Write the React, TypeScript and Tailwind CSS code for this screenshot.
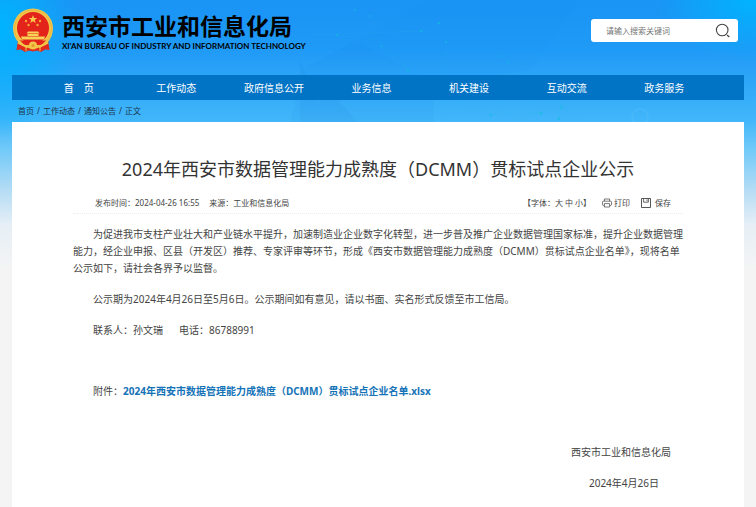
import React from 'react';

interface ILink {
	id: number;
	label: string;
}

const navItems: ILink[] = [
	{ id: 1, label: '首\u2003页' },
	{ id: 2, label: '工作动态' },
	{ id: 3, label: '政府信息公开' },
	{ id: 4, label: '业务信息' },
	{ id: 5, label: '机关建设' },
	{ id: 6, label: '互动交流' },
	{ id: 7, label: '政务服务' }
];

const crumbs: ILink[] = [
	{ id: 1, label: '首页' },
	{ id: 2, label: '工作动态' },
	{ id: 3, label: '通知公告' }
];

const fontSizes = ['大', '中', '小'];

const Emblem = () => (
	<svg viewBox="0 0 42 46" className="h-[46px] w-[42px] shrink-0" aria-hidden="true">
		<path
			d="M6 32 L4.5 42 L9 41.5 L13 44 L17 42.5 L21 43.5 L25 42.5 L29 44 L33 41.5 L37.5 42 L36 32Z"
			fill="#e02a1c"
		/>
		<circle cx="21" cy="20.5" r="20" fill="#f3c64a" />
		<circle cx="21" cy="20.5" r="18.4" fill="none" stroke="#e8ad3a" strokeWidth="0.8" />
		<circle cx="21" cy="20" r="16" fill="#e3241b" />
		<path d="M21 7l1.1 2.9 3.1.1-2.4 1.9.9 3-2.7-1.7-2.7 1.7.9-3-2.4-1.9 3.1-.1z" fill="#f9c94c" />
		<g fill="#f6a93b">
			<circle cx="14" cy="13" r="1.2" />
			<circle cx="28" cy="13" r="1.2" />
			<circle cx="16.5" cy="17" r="1.2" />
			<circle cx="25.5" cy="17" r="1.2" />
		</g>
		<path d="M16 23.5h10l1.5 2h-13zM15.5 26h11v2h-11zM9 28.5h24l-1 3H10z" fill="#f8d257" />
		<path d="M8 32c7 2 19 2 26 0l-4 5H12z" fill="#e3241b" />
		<circle cx="21" cy="37.5" r="4" fill="#f3c64a" />
		<circle cx="21" cy="37.5" r="1.6" fill="#e8982b" />
		<path d="M6 34.5l9 4.5M36 34.5l-9 4.5" stroke="#f3c64a" strokeWidth="2" />
		<path d="M14 39v4M28 39v4" stroke="#f3c64a" strokeWidth="1" />
	</svg>
);

const Backdrop = () => (
	<svg
		viewBox="0 0 756 122"
		preserveAspectRatio="none"
		className="pointer-events-none absolute inset-x-0 top-0 h-[122px] w-full"
		aria-hidden="true"
	>
		<path d="M304 68L356 41L434 84V122H290z" fill="#1674d8" opacity="0.06" />
		<path d="M428 0L356 41L434 84L530 70L578 0z" fill="#0d84f0" opacity="0.05" />
		<path d="M300 60L326 122H300zM318 100L336 98L358 122H325z" fill="#1674d8" opacity="0.08" />
		<g stroke="#22c3e8" strokeWidth="0.5" fill="none" opacity="0.25">
			<path d="M313 35L337 34L421 31L439 23M381 45L408 70M500 56L518 70M446 42V122" />
			<path d="M456 100L491 115L541 113L561 107L559 119M491 115L476 122M500 100L504 122M530 100L541 113L508 122" />
			<path d="M561 107L580 122M561 107L548 100" />
		</g>
		<g fill="#12bfe0" opacity="0.6">
			<circle cx="337" cy="35" r="1.2" />
			<circle cx="355" cy="10" r="1" />
			<circle cx="370" cy="16" r="1" />
			<circle cx="381" cy="46" r="1" />
			<circle cx="408" cy="71" r="1.2" />
			<circle cx="421" cy="31" r="1.2" />
			<circle cx="439" cy="23" r="1.2" />
			<circle cx="446" cy="42" r="1.2" />
			<circle cx="498" cy="56" r="1" />
			<circle cx="508" cy="62" r="1" />
			<circle cx="491" cy="115" r="1.2" />
			<circle cx="541" cy="113" r="1.6" />
			<circle cx="561" cy="107" r="1.4" />
			<circle cx="559" cy="119" r="1.4" />
		</g>
		<circle cx="640" cy="117" r="8" fill="none" stroke="#6cc9fb" strokeWidth="1.5" opacity="0.25" />
	</svg>
);

const SearchIcon = () => (
	<svg viewBox="0 0 16 16" className="size-4" fill="none" stroke="#444" aria-hidden="true">
		<circle cx="7.2" cy="7" r="5.8" strokeWidth="1.1" />
		<path d="M12 12l2.3 2" strokeWidth="1.2" />
	</svg>
);

const PrintIcon = () => (
	<svg viewBox="0 0 10 10" className="size-[10px]" fill="none" stroke="#555" aria-hidden="true">
		<path
			d="M2.4 3.2V1h5.2v2.2M2.4 7.4h-1a.9.9 0 0 1-.9-.9V4.1a.9.9 0 0 1 .9-.9h7.2a.9.9 0 0 1 .9.9v2.4a.9.9 0 0 1-.9.9h-1"
			strokeWidth="0.8"
		/>
		<path d="M2.4 5.6h5.2V9H2.4z" strokeWidth="0.8" />
	</svg>
);

const SaveIcon = () => (
	<svg viewBox="0 0 10 10" className="size-[10px]" fill="none" stroke="#444" aria-hidden="true">
		<path d="M.5.5h9v9h-9z" strokeWidth="0.9" />
		<path d="M2.6.6v3.6h4.8V.6M6 1.4v1.8" strokeWidth="0.8" />
	</svg>
);

export default function App() {
	const [query, setQuery] = React.useState<string>('');

	return (
		<div className="relative flex min-h-screen flex-col bg-[#f4f4f4] bg-[radial-gradient(ellipse_80px_110px_at_0_30px,#00b4ff,transparent),radial-gradient(ellipse_100px_60px_at_100%_0,#00b4ff,transparent),linear-gradient(180deg,#1a94f5_0px,#1f9af6_50px,#41b6fa_120px,#72caf8_150px,#b4dcf5_190px,#e6eff6_225px,#f4f4f4_270px)] px-3 font-['Noto_Sans','Noto_Sans_CJK_SC',sans-serif] text-[#444]">
			<Backdrop />
			<header className="relative">
				<div className="flex h-[75px] items-start justify-between pr-1.5">
					<a href="#" className="flex items-start pt-2 text-black">
						<Emblem />
						<span className="flex flex-col pt-1 pl-2">
							<span className="text-[23px] leading-7 font-bold whitespace-nowrap">
								西安市工业和信息化局
							</span>
							<span className="pt-0.5 font-['Lato',sans-serif] text-[8px] leading-2 font-bold whitespace-nowrap">
								XI'AN BUREAU OF INDUSTRY AND INFORMATION TECHNOLOGY
							</span>
						</span>
					</a>
					<form
						className="mt-[19px] flex h-[23px] w-[147px] items-center rounded-[3px] bg-white pr-[7px] pl-[15px]"
						onSubmit={e => e.preventDefault()}
					>
						<input
							type="text"
							aria-label="搜索"
							placeholder="请输入搜索关键词"
							value={query}
							onChange={e => setQuery(e.target.value)}
							className="min-w-0 flex-1 text-[8px] leading-4 outline-none placeholder:text-[#757575]"
						/>
						<button type="submit" aria-label="搜索">
							<SearchIcon />
						</button>
					</form>
				</div>
				<nav className="flex h-[25px] items-center bg-[#0274c6] pr-[31px] pl-[18px]">
					{navItems.map(item => (
						<a
							key={item.id}
							href="#"
							className="flex-1 text-center text-[10px] leading-4 whitespace-pre text-white"
						>
							{item.label}
						</a>
					))}
				</nav>
			</header>

			<div className="relative flex h-[22px] items-center gap-[3px] pl-1.5 text-[8px] leading-4 text-[#1c3347]">
				{crumbs.map(crumb => (
					<React.Fragment key={crumb.id}>
						<a href="#">{crumb.label}</a>
						<span>/</span>
					</React.Fragment>
				))}
				<span>正文</span>
			</div>

			<main className="relative flex-1 bg-white px-[61px] pt-[33px] pb-4">
				<h1 className="text-center text-[18px] leading-7 whitespace-nowrap text-[#333]">
					2024年西安市数据管理能力成熟度（DCMM）贯标试点企业公示
				</h1>

				<div className="mt-3 flex items-center justify-between border-b border-dotted border-[#ececec] pr-3 pb-0.5 pl-[22px] text-[8px] leading-4">
					<div className="flex gap-2.5">
						<span>发布时间：2024-04-26 16:55</span>
						<span>来源：工业和信息化局</span>
					</div>
					<div className="flex items-center gap-[11px]">
						<div className="flex items-center">
							<span>【字体：</span>
							<span className="flex gap-0.5">
								{fontSizes.map(size => (
									<button key={size} type="button">
										{size}
									</button>
								))}
							</span>
							<span>】</span>
						</div>
						<button type="button" className="flex items-center gap-0.5">
							<PrintIcon />
							打印
						</button>
						<button type="button" className="flex items-center gap-1">
							<SaveIcon />
							保存
						</button>
					</div>
				</div>

				<article className="mt-3 flex flex-col gap-3.5 text-[10px] leading-[17px]">
					<p className="indent-5">
						为促进我市支柱产业壮大和产业链水平提升，加速制造业企业数字化转型，进一步普及推广企业数据管理国家标准，提升企业数据管理能力，经企业申报、区县（开发区）推荐、专家评审等环节，形成《西安市数据管理能力成熟度（DCMM）贯标试点企业名单》，现将名单公示如下，请社会各界予以监督。
					</p>
					<p className="indent-5">
						公示期为2024年4月26日至5月6日。公示期间如有意见，请以书面、实名形式反馈至市工信局。
					</p>
					<p className="flex gap-4 pl-5">
						<span>联系人：孙文瑞</span>
						<span>电话：86788991</span>
					</p>
					<p className="mt-[30px] pl-5">
						附件：
						<a href="#" className="font-bold text-[#1573b7]">
							2024年西安市数据管理能力成熟度（DCMM）贯标试点企业名单.xlsx
						</a>
					</p>
					<p className="mt-[30px] pr-3 text-right">西安市工业和信息化局</p>
					<p className="pr-6 text-right">2024年4月26日</p>
				</article>
			</main>
		</div>
	);
}
